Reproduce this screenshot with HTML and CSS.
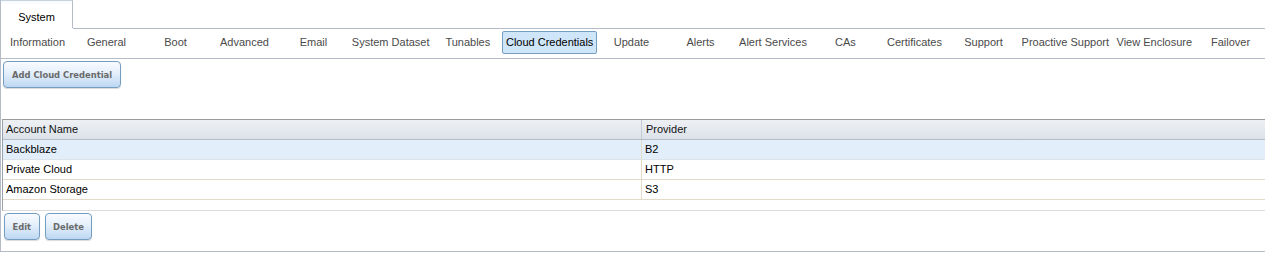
FILE: index.html
```html
<!DOCTYPE html>
<html lang="en">
<head>
    <meta charset="UTF-8">
    <title>System - Cloud Credentials</title>
    <link rel="stylesheet" href="styles.css">
</head>
<body>
    <div class="panel">
        <div class="top-tabs">
            <div class="top-tab">System</div>
            <div class="top-fill"></div>
        </div>

        <div class="sub-tabs">
            <span class="sub-tab">Information</span>
            <span class="sub-tab">General</span>
            <span class="sub-tab">Boot</span>
            <span class="sub-tab">Advanced</span>
            <span class="sub-tab">Email</span>
            <span class="sub-tab">System Dataset</span>
            <span class="sub-tab">Tunables</span>
            <span class="sub-tab selected">Cloud Credentials</span>
            <span class="sub-tab">Update</span>
            <span class="sub-tab">Alerts</span>
            <span class="sub-tab">Alert Services</span>
            <span class="sub-tab">CAs</span>
            <span class="sub-tab">Certificates</span>
            <span class="sub-tab">Support</span>
            <span class="sub-tab">Proactive Support</span>
            <span class="sub-tab">View Enclosure</span>
            <span class="sub-tab">Failover</span>
        </div>

        <div class="content">
            <div class="toolbar">
                <button class="btn">Add Cloud Credential</button>
            </div>

            <div class="grid">
                <div class="grid-row grid-head">
                    <div class="cell col-name">Account Name</div>
                    <div class="cell col-provider">Provider</div>
                </div>
                <div class="grid-body">
                    <div class="grid-row active">
                        <div class="cell col-name">Backblaze</div>
                        <div class="cell col-provider">B2</div>
                    </div>
                    <div class="grid-row">
                        <div class="cell col-name">Private Cloud</div>
                        <div class="cell col-provider">HTTP</div>
                    </div>
                    <div class="grid-row">
                        <div class="cell col-name">Amazon Storage</div>
                        <div class="cell col-provider">S3</div>
                    </div>
                </div>
            </div>

            <div class="actions">
                <button class="btn">Edit</button>
                <button class="btn">Delete</button>
            </div>
        </div>
    </div>
</body>
</html>
```

FILE: styles.css
```css
body {
    margin: 0;
    font-family: "Liberation Sans", Arial, sans-serif;
    font-size: 11px;
    color: #000;
    background-color: #fff;
}
.panel {
    border-left: 1px solid #b5bcc7;
    border-bottom: 1px solid #b5bcc7;
    box-shadow: 0 1px 0 #d8dce2;
    height: 252px;
    box-sizing: border-box;
}
.top-tabs {
    display: flex;
    height: 29px;
}
.top-tab {
    width: 72px;
    height: 28px;
    box-sizing: border-box;
    border-top: 1px solid #c6d3e0;
    border-right: 1px solid #b5bcc7;
    background: linear-gradient(#f7f9fb, #fff 4px);
    display: flex;
    align-items: center;
    justify-content: center;
    padding-top: 5px;
    color: #000;
}
.top-fill {
    flex: 1;
    border-bottom: 1px solid #b5bcc7;
}
.sub-tabs {
    display: flex;
    align-items: flex-start;
    height: 30px;
    box-sizing: border-box;
    padding: 2px 0 0 2px;
    border-bottom: 1px solid #b5bcc7;
    white-space: nowrap;
}
.sub-tab {
    display: flex;
    align-items: center;
    justify-content: center;
    box-sizing: border-box;
    min-width: 69px;
    height: 23px;
    padding: 0 4.5px 2px;
    border: 1px solid transparent;
    border-radius: 2px;
    color: #4a4a4a;
}
.sub-tab.selected {
    background-color: #cfe5fa;
    border-color: #759dc0;
    color: #000;
}
.content {
    padding: 2px 0 0 0;
}
.toolbar {
    padding-left: 2px;
    height: 58px;
}
.btn {
    height: 27px;
    padding: 0 7.5px;
    border: 1px solid #759dc0;
    border-radius: 4px;
    background: linear-gradient(#f9fbfe, #e4effb 45%, #bdd7f2);
    box-shadow: 0 1px 1px rgba(0,0,0,0.15);
    font-family: "DejaVu Sans", Verdana, sans-serif;
    font-size: 8.4px;
    font-weight: bold;
    color: #6a6a6a;
    cursor: pointer;
}
.toolbar .btn {
    padding: 0 8px;
}
.grid {
    margin-left: 1px;
    border-left: 1px solid #9aa1aa;
    border-top: 1px solid #9b9b9b;
    border-bottom: 1px solid #dcdcdc;
}
.grid-row {
    display: flex;
    height: 20px;
    box-sizing: border-box;
    border-bottom: 1px solid #e5dac8;
}
.grid-head {
    height: 20px;
    background: linear-gradient(#eef1f4, #dbe2e9);
    border-bottom: 1px solid #b5bcc7;
}
.grid-head .cell {
    color: #111;
}
.grid-head .col-name {
    border-right-color: #c3cad2;
}
.grid-body {
    height: 70px;
}
.grid-row.active {
    background-color: #e2eefa;
    border-bottom-color: #dde3ea;
}
.cell {
    display: flex;
    align-items: center;
    padding: 0 0 1px 3px;
    box-sizing: border-box;
}
.col-name {
    width: 639px;
    border-right: 1px solid #e5dac8;
}
.col-provider {
    flex: 1;
    padding-left: 3px;
}
.grid-head .col-provider {
    padding-left: 4px;
}
.actions {
    display: flex;
    gap: 5px;
    padding: 2px 0 0 3px;
}
```
